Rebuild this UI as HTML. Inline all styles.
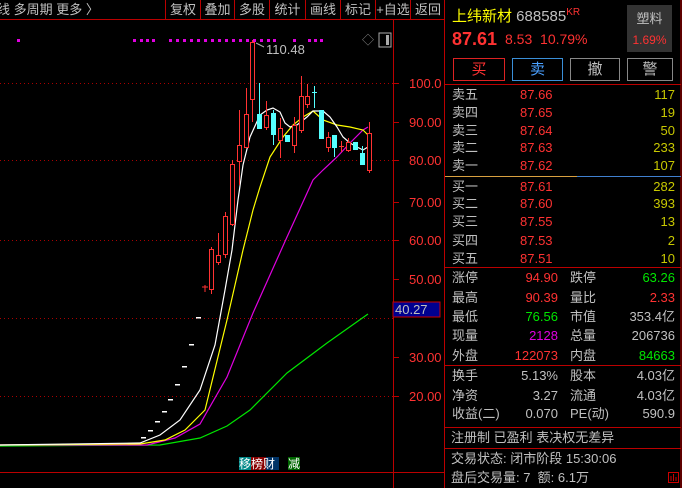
<!DOCTYPE html>
<html><head><meta charset="utf-8"><style>
*{margin:0;padding:0;box-sizing:border-box}
body{width:682px;height:488px;background:#000;overflow:hidden;position:relative;font-family:"Liberation Sans","Noto Sans CJK SC",sans-serif;font-size:13px;color:#c0c0c0}
.a{position:absolute;white-space:nowrap}
.r{color:#ff3232}.g{color:#00e600}.y{color:#c8c800}.m{color:#e000e0}
.tb{position:absolute;top:0;height:19px;line-height:19px;font-size:13px;text-align:center;color:#c0c0c0;border-left:1px solid #b00}
.row{position:absolute;left:445px;width:237px;height:19px;line-height:19px;font-size:13px}
.row span{position:absolute}
.btn{position:absolute;top:58px;height:23px;line-height:21px;text-align:center;font-size:15px;border:1px solid}
</style></head><body>
<div class="a" style="left:-3px;top:0;line-height:19px">线 多周期 更多 〉</div>
<div class="tb" style="left:165px;width:35px">复权</div>
<div class="tb" style="left:200px;width:34px">叠加</div>
<div class="tb" style="left:234px;width:35px">多股</div>
<div class="tb" style="left:269px;width:36px">统计</div>
<div class="tb" style="left:305px;width:35px">画线</div>
<div class="tb" style="left:340px;width:35px">标记</div>
<div class="tb" style="left:375px;width:35px">+自选</div>
<div class="tb" style="left:410px;width:35px">返回</div>
<svg class="a" style="left:0;top:0" width="682" height="488">
<line x1="0" y1="19.5" x2="445" y2="19.5" stroke="#b00"/>
<line x1="393.5" y1="20" x2="393.5" y2="488" stroke="#b00"/>
<line x1="0" y1="472.5" x2="445" y2="472.5" stroke="#b00"/>
<line x1="444.5" y1="0" x2="444.5" y2="488" stroke="#b00"/>
<line x1="681" y1="0" x2="681" y2="488" stroke="#b00"/>
<g stroke="#a00" stroke-dasharray="1,3">
<line x1="0" y1="83.5" x2="393" y2="83.5"/><line x1="0" y1="160.5" x2="393" y2="160.5"/><line x1="0" y1="240.5" x2="393" y2="240.5"/><line x1="0" y1="318.5" x2="393" y2="318.5"/><line x1="0" y1="396.5" x2="393" y2="396.5"/>
</g>
<g stroke="#b00"><line x1="393" y1="83.5" x2="399" y2="83.5"/><line x1="393" y1="122.5" x2="399" y2="122.5"/><line x1="393" y1="160.5" x2="399" y2="160.5"/><line x1="393" y1="202.5" x2="399" y2="202.5"/><line x1="393" y1="240.5" x2="399" y2="240.5"/><line x1="393" y1="279.5" x2="399" y2="279.5"/><line x1="393" y1="357.5" x2="399" y2="357.5"/><line x1="393" y1="396.5" x2="399" y2="396.5"/></g>
<g fill="#ff3232" font-size="13" font-family="Liberation Sans">
<text x="409" y="88">100.0</text><text x="409" y="127">90.00</text><text x="409" y="165">80.00</text><text x="409" y="207">70.00</text><text x="409" y="245">60.00</text><text x="409" y="284">50.00</text><text x="409" y="362">30.00</text><text x="409" y="401">20.00</text>
</g>
<rect x="393" y="302" width="47" height="15" fill="#000090" stroke="#c00"/>
<text x="395" y="314" fill="#c0c0c0" font-size="13" font-family="Liberation Sans">40.27</text>
<g fill="#e000e0">
<rect x="17" y="39" width="3" height="3"/>
<rect x="133" y="39" width="3" height="3"/><rect x="140" y="39" width="3" height="3"/><rect x="146" y="39" width="3" height="3"/><rect x="152" y="39" width="3" height="3"/>
<rect x="169" y="39" width="3" height="3"/><rect x="176" y="39" width="3" height="3"/><rect x="183" y="39" width="3" height="3"/><rect x="190" y="39" width="3" height="3"/><rect x="197" y="39" width="3" height="3"/><rect x="204" y="39" width="3" height="3"/><rect x="211" y="39" width="3" height="3"/><rect x="218" y="39" width="3" height="3"/><rect x="225" y="39" width="3" height="3"/><rect x="232" y="39" width="3" height="3"/><rect x="239" y="39" width="3" height="3"/><rect x="246" y="39" width="3" height="3"/><rect x="253" y="39" width="3" height="3"/><rect x="260" y="39" width="3" height="3"/><rect x="267" y="39" width="3" height="3"/><rect x="273" y="39" width="3" height="3"/>
<rect x="293" y="39" width="3" height="3"/><rect x="308" y="39" width="3" height="3"/><rect x="314" y="39" width="3" height="3"/><rect x="320" y="39" width="3" height="3"/>
</g>
<text x="362" y="44" fill="#888" font-size="12">◇</text>
<rect x="379" y="33" width="12" height="14" fill="none" stroke="#aaa"/><rect x="386" y="35" width="3" height="10" fill="#aaa"/>
<path d="M256 43 L264 47" stroke="#aaa"/>
<text x="266" y="54" fill="#c0c0c0" font-size="13" font-family="Liberation Sans">110.48</text>
<g fill="#fff">
<rect x="141" y="437" width="5" height="1.5"/><rect x="148" y="430" width="5" height="1.5"/><rect x="155" y="421" width="5" height="1.5"/><rect x="162" y="411" width="5" height="1.5"/><rect x="168" y="399" width="5" height="1.5"/><rect x="175" y="384" width="5" height="1.5"/><rect x="182" y="366" width="5" height="1.5"/><rect x="189" y="344" width="5" height="1.5"/><rect x="196" y="317" width="5" height="1.5"/>
</g>
<g fill="none" stroke-width="1.2">
<polyline stroke="#00e600" points="0,446 160,445 200,438 227,426 250,410 287,373 327,343 368,314"/>
<polyline stroke="#e000e0" points="0,445 147,445 175,438 200,424 227,377 253,313 287,237 313,180 323,170 337,157 350,143 363,130 368,127"/>
<polyline stroke="#ffff00" points="0,445 140,444 165,440 185,430 205,410 227,320 243,250 253,210 260,187 270,157 283,137 293,125 303,117 313,111 323,120 337,125 350,127 363,130 368,135"/>
<polyline stroke="#fff" points="0,445 140,443 160,435 180,420 200,390 215,345 225,290 232,250 238,200 243,165 250,137 260,115 267,110 273,108 280,112 285,123 290,127 297,125 307,117 313,111 323,111 330,117 337,127 343,137 350,143 357,147 363,150 368,147"/>
</g>
<g stroke="#ff3232" fill="none">
<line x1="205" y1="285" x2="205" y2="292"/><line x1="202" y1="287" x2="208" y2="287"/>
<line x1="211.5" y1="247" x2="211.5" y2="294"/><rect x="209.5" y="249.5" width="4" height="40" fill="#000"/>
<line x1="218.5" y1="233" x2="218.5" y2="265"/><rect x="216.5" y="255.5" width="4" height="7" fill="#000"/>
<line x1="225.5" y1="212" x2="225.5" y2="258"/><rect x="223.5" y="216.5" width="4" height="38" fill="#000"/>
<line x1="232.5" y1="160" x2="232.5" y2="226"/><rect x="230.5" y="164.5" width="4" height="60" fill="#000"/>
<line x1="239.5" y1="110" x2="239.5" y2="185"/><rect x="237.5" y="145.5" width="4" height="16" fill="#000"/>
<line x1="246.5" y1="88" x2="246.5" y2="148"/><rect x="244.5" y="114.5" width="4" height="33" fill="#000"/>
<line x1="252.5" y1="40" x2="252.5" y2="122"/><rect x="250.5" y="42.5" width="4" height="57" fill="#000"/>
<line x1="266.5" y1="101" x2="266.5" y2="130"/><rect x="264.5" y="115.5" width="4" height="12" fill="#000"/>
<line x1="280.5" y1="118" x2="280.5" y2="158"/><rect x="278.5" y="128.5" width="4" height="12" fill="#000"/>
<line x1="294.5" y1="117" x2="294.5" y2="153"/><rect x="292.5" y="125.5" width="4" height="20" fill="#000"/>
<line x1="301.5" y1="76" x2="301.5" y2="133"/><rect x="299.5" y="96.5" width="4" height="34" fill="#000"/>
<line x1="307.5" y1="84" x2="307.5" y2="108"/><rect x="305.5" y="96.5" width="4" height="8" fill="#000"/>
<line x1="328.5" y1="132" x2="328.5" y2="152"/><rect x="326.5" y="137.5" width="4" height="10" fill="#000"/>
<line x1="341.5" y1="141" x2="341.5" y2="152"/><line x1="339" y1="146.5" x2="344" y2="146.5"/>
<line x1="348.5" y1="138" x2="348.5" y2="152"/><rect x="346.5" y="142.5" width="4" height="8" fill="#000"/>
<line x1="369.5" y1="122" x2="369.5" y2="173"/><rect x="367.5" y="133.5" width="4" height="37" fill="#000"/>
</g>
<g fill="#5ff" stroke="#5ff">
<line x1="259.5" y1="83" x2="259.5" y2="129"/><rect x="257.5" y="114.5" width="4" height="14"/>
<line x1="273.5" y1="110" x2="273.5" y2="145"/><rect x="271.5" y="113.5" width="4" height="21"/>
<rect x="285.5" y="135.5" width="4" height="6"/>
<line x1="314.5" y1="86" x2="314.5" y2="108"/><line x1="312" y1="92.5" x2="317" y2="92.5"/>
<rect x="319.5" y="110.5" width="4" height="28"/>
<line x1="334.5" y1="136" x2="334.5" y2="157"/><rect x="332.5" y="135.5" width="4" height="12"/>
<rect x="353.5" y="142.5" width="4" height="7"/>
<line x1="362.5" y1="146" x2="362.5" y2="165"/><rect x="360.5" y="153.5" width="4" height="11"/>
</g>
<rect x="239" y="457" width="12" height="13" fill="#088"/><rect x="251" y="457" width="15" height="13" fill="#800"/><rect x="266" y="457" width="13" height="13" fill="#036"/><rect x="288" y="457" width="12" height="13" fill="#060"/>
<text x="239" y="468" fill="#fff" font-size="12" font-family="Noto Sans CJK SC">移榜财</text>
<text x="288" y="468" fill="#fff" font-size="12" font-family="Noto Sans CJK SC">减</text>
<g stroke="#b00"><line x1="445" y1="84.5" x2="681" y2="84.5"/><line x1="445" y1="267.5" x2="681" y2="267.5"/><line x1="445" y1="365.5" x2="681" y2="365.5"/><line x1="445" y1="427.5" x2="681" y2="427.5"/><line x1="445" y1="448.5" x2="681" y2="448.5"/></g>
<line x1="445" y1="176.5" x2="577" y2="176.5" stroke="#d8a040"/><line x1="577" y1="176.5" x2="681" y2="176.5" stroke="#4080d0"/>
<g stroke="#c00" fill="none"><rect x="668.5" y="472.5" width="10" height="10"/><path d="M671 481v-5M673.5 481v-7M676 481v-4"/></g>
</svg>
<div class="a" style="left:452px;top:5px;font-size:15px;color:#ffff00">上纬新材 <span style="color:#c0c0c0">688585</span><sup class="r" style="font-size:10px">KR</sup></div>
<div class="a" style="left:627px;top:5px;width:45px;height:47px;background:#333"></div>
<div class="a" style="left:627px;top:8px;width:45px;text-align:center;font-size:13px">塑料</div>
<div class="a r" style="left:627px;top:33px;width:45px;text-align:center;font-size:12px">1.69%</div>
<div class="a r" style="left:452px;top:29px;font-size:18px;font-weight:bold">87.61</div>
<div class="a r" style="left:505px;top:31px;font-size:14px">8.53&nbsp;&nbsp;10.79%</div>
<div class="btn" style="left:453px;width:52px;border-color:#d22;color:#ff3232">买</div>
<div class="btn" style="left:512px;width:51px;border-color:#3a8fd8;color:#4aa0ff">卖</div>
<div class="btn" style="left:570px;width:50px;border-color:#888;color:#c0c0c0">撤</div>
<div class="btn" style="left:627px;width:46px;border-color:#888;color:#c0c0c0">警</div>
<div class="row" style="top:85px"><span style="left:7px">卖五</span><span class="r" style="left:75px">87.66</span><span class="y" style="right:7px">117</span></div>
<div class="row" style="top:103px"><span style="left:7px">卖四</span><span class="r" style="left:75px">87.65</span><span class="y" style="right:7px">19</span></div>
<div class="row" style="top:121px"><span style="left:7px">卖三</span><span class="r" style="left:75px">87.64</span><span class="y" style="right:7px">50</span></div>
<div class="row" style="top:138px"><span style="left:7px">卖二</span><span class="r" style="left:75px">87.63</span><span class="y" style="right:7px">233</span></div>
<div class="row" style="top:156px"><span style="left:7px">卖一</span><span class="r" style="left:75px">87.62</span><span class="y" style="right:7px">107</span></div>
<div class="row" style="top:177px"><span style="left:7px">买一</span><span class="r" style="left:75px">87.61</span><span class="y" style="right:7px">282</span></div>
<div class="row" style="top:194px"><span style="left:7px">买二</span><span class="r" style="left:75px">87.60</span><span class="y" style="right:7px">393</span></div>
<div class="row" style="top:212px"><span style="left:7px">买三</span><span class="r" style="left:75px">87.55</span><span class="y" style="right:7px">13</span></div>
<div class="row" style="top:231px"><span style="left:7px">买四</span><span class="r" style="left:75px">87.53</span><span class="y" style="right:7px">2</span></div>
<div class="row" style="top:249px"><span style="left:7px">买五</span><span class="r" style="left:75px">87.51</span><span class="y" style="right:7px">10</span></div>
<div class="row" style="top:268px"><span style="left:7px">涨停</span><span class="r" style="right:124px">94.90</span><span style="left:125px">跌停</span><span class="g" style="right:7px">63.26</span></div>
<div class="row" style="top:288px"><span style="left:7px">最高</span><span class="r" style="right:124px">90.39</span><span style="left:125px">量比</span><span class="r" style="right:7px">2.33</span></div>
<div class="row" style="top:307px"><span style="left:7px">最低</span><span class="g" style="right:124px">76.56</span><span style="left:125px">市值</span><span style="right:7px">353.4亿</span></div>
<div class="row" style="top:326px"><span style="left:7px">现量</span><span class="m" style="right:124px">2128</span><span style="left:125px">总量</span><span style="right:7px">206736</span></div>
<div class="row" style="top:346px"><span style="left:7px">外盘</span><span class="r" style="right:124px">122073</span><span style="left:125px">内盘</span><span class="g" style="right:7px">84663</span></div>
<div class="row" style="top:366px"><span style="left:7px">换手</span><span style="right:124px">5.13%</span><span style="left:125px">股本</span><span style="right:7px">4.03亿</span></div>
<div class="row" style="top:386px"><span style="left:7px">净资</span><span style="right:124px">3.27</span><span style="left:125px">流通</span><span style="right:7px">4.03亿</span></div>
<div class="row" style="top:404px"><span style="left:7px">收益(二)</span><span style="right:124px">0.070</span><span style="left:125px">PE(动)</span><span style="right:7px">590.9</span></div>
<div class="row" style="top:428px"><span style="left:6px">注册制 已盈利 表决权无差异</span></div>
<div class="row" style="top:449px"><span style="left:6px">交易状态: 闭市阶段 15:30:06</span></div>
<div class="row" style="top:468px"><span style="left:6px">盘后交易量: 7&nbsp;&nbsp;额: 6.1万</span></div>
</body></html>
